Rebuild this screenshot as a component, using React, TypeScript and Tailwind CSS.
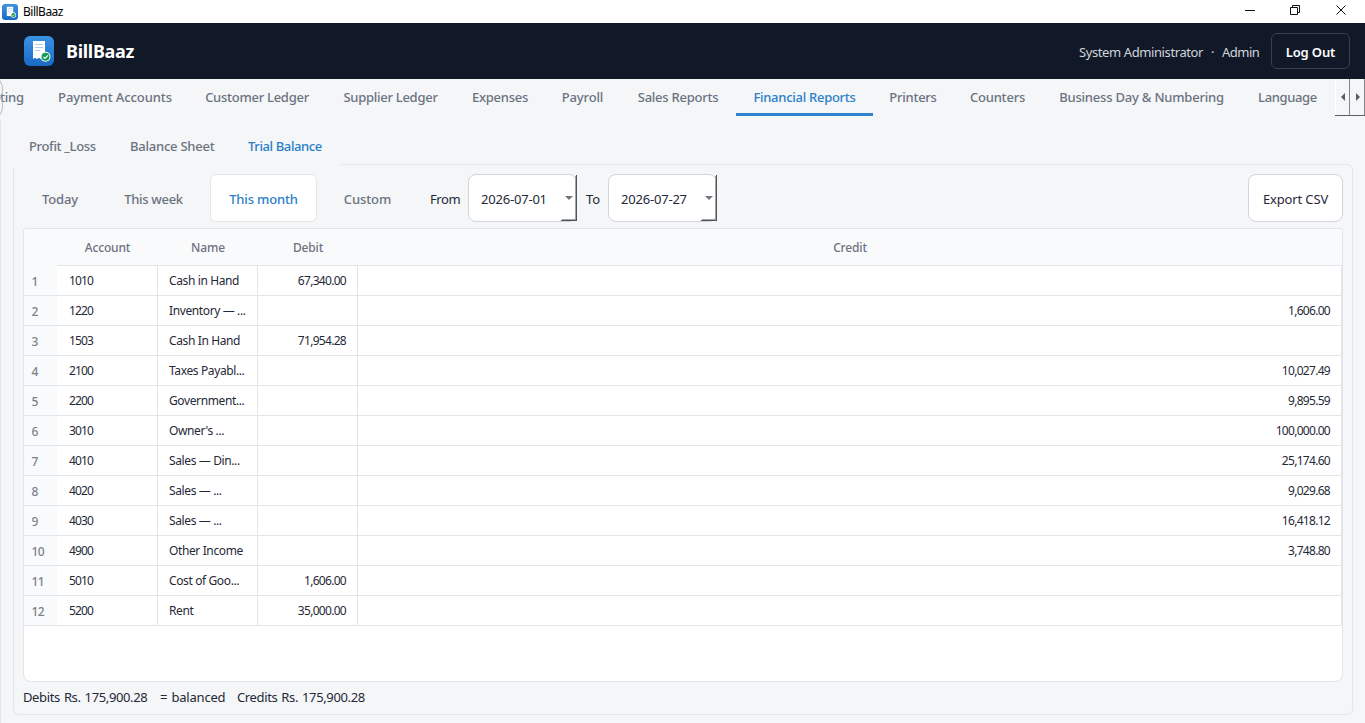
import React from "react";

const tabs = [
  { label: "Payment Accounts", cls: "w-[146px] tracking-[-0.09px]" },
  { label: "Customer Ledger", cls: "w-[138px] tracking-[-0.27px]" },
  { label: "Supplier Ledger", cls: "w-[129px] tracking-[-0.27px]" },
  { label: "Expenses", cls: "w-[90px] tracking-[-0.25px]" },
  { label: "Payroll", cls: "w-[75px] tracking-[-0.15px]" },
  { label: "Sales Reports", cls: "w-[116px] tracking-[-0.25px]" },
  { label: "Financial Reports", cls: "w-[137px] tracking-[-0.27px]", active: true },
  { label: "Printers", cls: "w-[80px] tracking-[-0.25px]" },
  { label: "Counters", cls: "w-[89px] tracking-[-0.2px]" },
  { label: "Business Day & Numbering", cls: "w-[199px] tracking-[-0.2px]" },
  { label: "Language", cls: "w-[93px] tracking-[-0.35px]" },
];

const rows = [
  ["1010", "Cash in Hand", "67,340.00", ""],
  ["1220", "Inventory — ...", "", "1,606.00"],
  ["1503", "Cash In Hand", "71,954.28", ""],
  ["2100", "Taxes Payabl...", "", "10,027.49"],
  ["2200", "Government...", "", "9,895.59"],
  ["3010", "Owner's ...", "", "100,000.00"],
  ["4010", "Sales — Din...", "", "25,174.60"],
  ["4020", "Sales — ...", "", "9,029.68"],
  ["4030", "Sales — ...", "", "16,418.12"],
  ["4900", "Other Income", "", "3,748.80"],
  ["5010", "Cost of Goo...", "1,606.00", ""],
  ["5200", "Rent", "35,000.00", ""],
];

function Logo({ className }: { className: string }) {
  return (
    <svg viewBox="0 0 30 30" className={className}>
      <defs>
        <linearGradient id="logoFill" x1="0" y1="0" x2="0" y2="1">
          <stop offset="0" stopColor="#3a93e2" />
          <stop offset="1" stopColor="#1b69c6" />
        </linearGradient>
      </defs>
      <rect width="30" height="30" rx="6" fill="url(#logoFill)" />
      <path d="M9 5h12v18l-2-1.200-2 1.200-2-1.200-2 1.200-2-1.200L9 23z" fill="#fff" />
      <path d="M11 8.500h8M11 11.500h8M11 14.500h5" stroke="#b4cbe2" strokeWidth="1" />
      <circle cx="21.500" cy="20.700" r="5" fill="#fff" />
      <circle cx="21.500" cy="20.700" r="4" fill="#169a5c" />
      <path d="M19.400 20.800l1.600 1.600 2.900-3.100" stroke="#fff" strokeWidth="1.2" fill="none" />
    </svg>
  );
}

function DateField({ value }: { value: string }) {
  return (
    <div className="relative flex h-12 w-[109px] items-center rounded-lg border border-[#d1d5db] bg-white pl-3 pt-[2px] text-[13px] font-normal text-[#1f2937]">
      <span className="whitespace-nowrap tracking-[-0.2px]">{value}</span>
      <svg className="absolute right-[3px] top-[21px] h-1 w-2" viewBox="0 0 8 4">
        <path d="M0 0h8L4 4z" fill="#73777b" />
      </svg>
      <svg className="absolute -right-px top-0 h-[46px] w-4" viewBox="0 0 16 46" shapeRendering="crispEdges">
        <path d="M15 0h1v46H0v-1h15z" fill="#505357" />
        <path d="M14 1h1v44H1v-1h13z" fill="#a3a5a8" />
      </svg>
    </div>
  );
}

export default function App() {
  return (
    <div className="flex h-[723px] w-[1365px] flex-col overflow-hidden bg-[#f4f6f8] font-['Noto_Sans',sans-serif] text-[13px] leading-none text-[#1f2937]">
      <div className="flex h-[23px] shrink-0 items-center bg-white pl-[2px] text-black">
        <Logo className="size-4" />
        <span className="ml-[5px] text-[12px] tracking-[-0.5px]">BillBaaz</span>
        <svg className="mb-[3px] ml-auto mr-[18px] h-[12px] w-[103px]" viewBox="0 0 103 12" fill="none" stroke="#111" strokeWidth="1">
          <path d="M1 6.500h10" />
          <path d="M46.500 3.500h7v7h-7zM48.500 3.500v-2h7v7h-2" />
          <path d="M92.500 1.500l9 9M101.500 1.500l-9 9" />
        </svg>
      </div>

      <header className="flex h-14 shrink-0 items-center bg-[#111827] pl-6 pr-[15px]">
        <Logo className="size-[30px]" />
        <span className="ml-3 text-[18px] font-bold tracking-[-0.3px] text-white">BillBaaz</span>
        <div className="ml-auto flex pt-[3px] text-[13px] text-[#d1d5db]">
          <span className="w-[132px] whitespace-nowrap tracking-[-0.4px]">System Administrator</span>
          <span className="w-[11px]">·</span>
          <span className="w-[37px] tracking-[-0.5px]">Admin</span>
        </div>
        <button className="ml-3 h-[36px] w-[79px] rounded-md border border-[#374151] pt-[2px] text-[13px] font-semibold tracking-[-0.15px] text-white">
          Log Out
        </button>
      </header>

      <nav className="relative flex h-[37px] shrink-0 font-medium text-[#6b7280]">
        <svg className="absolute left-0 top-0 h-[37px] w-1" viewBox="0 0 4 37" fill="none" stroke="#b9bcc0">
          <path d="M0 1.500Q3 6 2.500 12Q2 16 0 18Q2 20 2.500 26Q3 31 0 36" />
        </svg>
        <div className="flex w-[42px] items-center text-[13px] tracking-[-0.2px]">ting</div>
        {tabs.map((t) => (
          <div
            key={t.label}
            className={`flex shrink-0 items-center justify-center whitespace-nowrap border-b-[3px] pt-[3px] ${t.cls} ${
              t.active ? "border-[#3182ce] text-[#2a7fc8]" : "border-transparent"
            }`}
          >
            {t.label}
          </div>
        ))}
        <div className="ml-auto flex h-[37px] w-[30px] border-b border-[#5c5f63]">
          <div className="flex w-[15px] items-center justify-center border-l border-r border-l-white border-r-[#84878a]">
            <svg className="h-2 w-1" viewBox="0 0 4 8"><path d="M4 0v8L0 4z" fill="#5a5d61" /></svg>
          </div>
          <div className="flex w-[15px] items-center justify-center border-r border-[#84878a]">
            <svg className="ml-[2px] h-2 w-1" viewBox="0 0 4 8"><path d="M0 0v8l4-4z" fill="#5a5d61" /></svg>
          </div>
        </div>
      </nav>

      <main className="mt-1 flex flex-1 flex-col border-l border-[#e2e5e9] pl-3 pr-3">
        <div className="flex h-[44px] shrink-0 items-center font-medium text-[#6b7280]">
          <span className="w-[101px] whitespace-nowrap pl-4 pt-[9px] tracking-[-0.34px]">Profit _Loss</span>
          <span className="w-[118px] whitespace-nowrap pl-4 pt-[9px] tracking-[-0.23px]">Balance Sheet</span>
          <span className="whitespace-nowrap pl-4 pt-[9px] tracking-[-0.38px] text-[#2a7fc8]">Trial Balance</span>
        </div>
        <section className="relative flex h-[551px] flex-col rounded-md border border-[#e2e5e9] px-[9px] pt-[9px]">
          <div className="absolute -left-px -top-px h-1 w-[328px] bg-[#f4f6f8]" />
          <div className="flex h-12 shrink-0 items-center font-medium text-[#6b7280]">
            <div className="w-[74px] pt-[2px] text-center tracking-[-0.1px]">Today</div>
            <div className="ml-[9px] w-[95px] pt-[2px] text-center tracking-[-0.3px]">This week</div>
            <div className="ml-[9px] flex h-12 w-[107px] items-center justify-center rounded-md border border-[#e5e7eb] bg-white pt-[2px] tracking-[-0.15px] text-[#2a7fc8]">
              This month
            </div>
            <div className="w-[101px] pt-[2px] text-center tracking-[-0.1px]">Custom</div>
            <span className="ml-[12px] w-[38px] pt-[2px] font-normal tracking-[-0.4px] text-[#1f2937]">From</span>
            <DateField value="2026-07-01" />
            <span className="ml-[9px] w-[22px] pt-[2px] font-normal text-[#1f2937]">To</span>
            <DateField value="2026-07-27" />
            <button className="ml-auto h-12 w-[95px] rounded-lg border border-[#d1d5db] bg-white pt-[2px] font-normal tracking-[-0.15px] text-[#1f2937]">
              Export CSV
            </button>
          </div>

          <div className="mt-[6px] h-[454px] w-[1320px] shrink-0 overflow-hidden rounded-b-lg rounded-t-[3px] border border-[#e2e5e9] bg-white text-[12px]">
            <div className="flex h-[36px] items-center bg-[#f9fafb] pt-[2px] text-center font-medium tracking-[-0.15px] text-[#6b7280]">
              <div className="w-[33px]" />
              <div className="w-[101px]">Account</div>
              <div className="w-[100px]">Name</div>
              <div className="w-[100px]">Debit</div>
              <div className="flex-1">Credit</div>
            </div>
            <div className="flex h-px">
              <div className="w-[33px] bg-[#f9fafb]" />
              <div className="flex-1 bg-[#e2e5e9]" />
            </div>
            {rows.map((r, i) => (
              <div key={r[0]} className="flex h-[30px] items-stretch border-b border-[#e2e5e9]">
                <div className="flex w-[33px] items-center bg-[#f9fafb] pl-[7.5px] pt-[3px] font-medium tracking-[-0.5px] text-[#7b818b]">{i + 1}</div>
                <div className="flex w-[101px] items-center border-r border-[#e2e5e9] pl-3 pt-px tracking-[-0.85px]">{r[0]}</div>
                <div className="flex w-[100px] items-center whitespace-nowrap border-r border-[#e2e5e9] pl-[11px] pt-px tracking-[-0.38px]">{r[1]}</div>
                <div className="flex w-[100px] items-center justify-end border-r border-[#e2e5e9] pr-[11px] pt-px tracking-[-0.7px]">{r[2]}</div>
                <div className="flex flex-1 items-center justify-end border-r border-[#e2e5e9] pr-[11px] pt-px tracking-[-0.7px]">{r[3]}</div>
              </div>
            ))}
          </div>
          <div className="flex h-[30px] items-center text-[13px] tracking-[-0.37px] [word-spacing:1px]">
            <span className="w-[137px]">Debits Rs. 175,900.28</span>
            <span className="w-[77px] tracking-[-0.2px]">= balanced</span>
            <span>Credits Rs. 175,900.28</span>
          </div>
        </section>
      </main>
    </div>
  );
}
